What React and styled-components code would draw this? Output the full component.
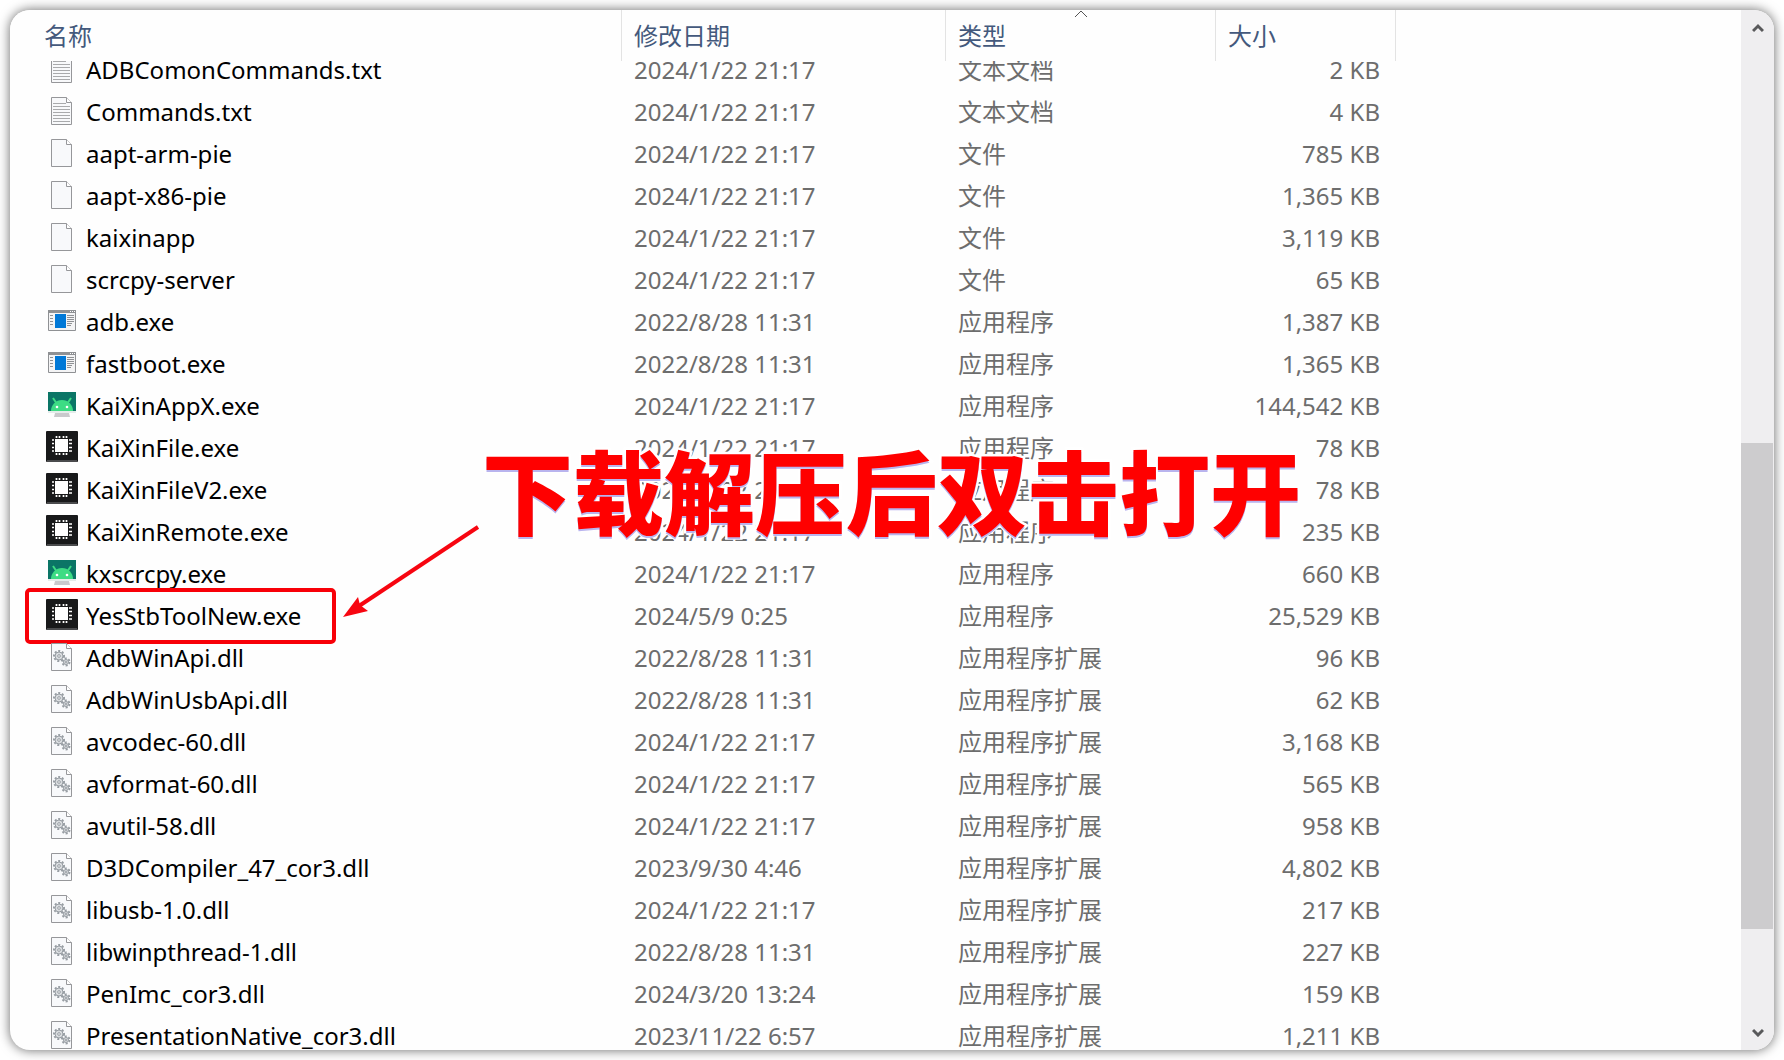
import styled, { createGlobalStyle, css } from "styled-components";

const files = [
  ["txt", "ADBComonCommands.txt", "2024/1/22 21:17", "文本文档", "2 KB"],
  ["txt", "Commands.txt", "2024/1/22 21:17", "文本文档", "4 KB"],
  ["file", "aapt-arm-pie", "2024/1/22 21:17", "文件", "785 KB"],
  ["file", "aapt-x86-pie", "2024/1/22 21:17", "文件", "1,365 KB"],
  ["file", "kaixinapp", "2024/1/22 21:17", "文件", "3,119 KB"],
  ["file", "scrcpy-server", "2024/1/22 21:17", "文件", "65 KB"],
  ["exe", "adb.exe", "2022/8/28 11:31", "应用程序", "1,387 KB"],
  ["exe", "fastboot.exe", "2022/8/28 11:31", "应用程序", "1,365 KB"],
  ["android", "KaiXinAppX.exe", "2024/1/22 21:17", "应用程序", "144,542 KB"],
  ["chip", "KaiXinFile.exe", "2024/1/22 21:17", "应用程序", "78 KB"],
  ["chip", "KaiXinFileV2.exe", "2024/1/22 21:17", "应用程序", "78 KB"],
  ["chip", "KaiXinRemote.exe", "2024/1/22 21:17", "应用程序", "235 KB"],
  ["android", "kxscrcpy.exe", "2024/1/22 21:17", "应用程序", "660 KB"],
  ["chip", "YesStbToolNew.exe", "2024/5/9 0:25", "应用程序", "25,529 KB"],
  ["dll", "AdbWinApi.dll", "2022/8/28 11:31", "应用程序扩展", "96 KB"],
  ["dll", "AdbWinUsbApi.dll", "2022/8/28 11:31", "应用程序扩展", "62 KB"],
  ["dll", "avcodec-60.dll", "2024/1/22 21:17", "应用程序扩展", "3,168 KB"],
  ["dll", "avformat-60.dll", "2024/1/22 21:17", "应用程序扩展", "565 KB"],
  ["dll", "avutil-58.dll", "2024/1/22 21:17", "应用程序扩展", "958 KB"],
  ["dll", "D3DCompiler_47_cor3.dll", "2023/9/30 4:46", "应用程序扩展", "4,802 KB"],
  ["dll", "libusb-1.0.dll", "2024/1/22 21:17", "应用程序扩展", "217 KB"],
  ["dll", "libwinpthread-1.dll", "2022/8/28 11:31", "应用程序扩展", "227 KB"],
  ["dll", "PenImc_cor3.dll", "2024/3/20 13:24", "应用程序扩展", "159 KB"],
  ["dll", "PresentationNative_cor3.dll", "2023/11/22 6:57", "应用程序扩展", "1,211 KB"],
];

const Sheet = ({ children }) => (
  <>
    <path d="M5.5 2.5h15l5 5v22h-20z" fill="#f8f9fb" stroke="#96979a" />
    {children}
    <path d="M20.5 2.5v5h5" fill="#fff" stroke="#96979a" />
  </>
);

const Gear = ({ x, y, r }) => (
  <g transform={`translate(${x} ${y})`} fill="none" stroke="#979da3">
    <circle r={r + 1} strokeWidth="2" strokeDasharray="2 1.7" />
    <circle r={r} fill="#d9dcdf" />
    <circle r={r / 3} fill="#fff" />
  </g>
);

const FileIcon = ({ kind }) => (
  <Icon viewBox="0 0 32 32" aria-hidden="true">
    {kind === "file" && <Sheet />}
    {kind === "txt" && (
      <Sheet>
        <path
          d="M7 8.5h13M7 11.5h17M7 14.5h17M7 17.5h17M7 20.5h17M7 23.5h17M7 26.5h17"
          stroke="#a9aaac"
        />
      </Sheet>
    )}
    {kind === "dll" && (
      <Sheet>
        <Gear x={13} y={15} r={4} />
        <Gear x={20} y={21} r={2.5} />
      </Sheet>
    )}
    {kind === "exe" && (
      <>
        <path d="M2.5 5.500h27v20h-27z" fill="#f4f4f5" stroke="#8f9194" />
        <path d="M2 5h28v3H2z" fill="#8f9194" />
        <path d="M24 6h1v1h-1zM26 6h1v1h-1zM28 6h1v1h-1z" fill="#fff" />
        <path d="M9 9h11v14H9z" fill="#0078d7" />
        <path
          d="M4 10.5h3M4 13.5h3M4 16.5h3M4 19.5h3M21 10.5h7M21 12.5h7M21 14.5h7M21 16.5h7M21 18.5h5M21 20.5h4"
          stroke="#8f9194"
        />
      </>
    )}
    {kind === "android" && (
      <>
        <path d="M2 3h28v19H2z" fill="#0b7566" />
        <path d="M2 22h28v2H2z" fill="#e4ecea" />
        <path d="M9 24h14l1 4H8z" fill="#c9c9cc" />
        <path d="M5 22a11 11 0 0 1 22 0z" fill="#3ddc84" />
        <path d="M7 9l4 6M25 9l-4 6" stroke="#3ddc84" strokeWidth="2" />
        <circle cx="11" cy="18" r="1.3" fill="#fff" />
        <circle cx="21" cy="18" r="1.3" fill="#fff" />
      </>
    )}
    {kind === "chip" && (
      <>
        <rect width="32" height="31" rx="1" fill="#18191a" />
        <path d="M1 29h30v2H1z" fill="#4a4b4d" />
        <path d="M9 8h13v13H9z" fill="#fff" />
        <path
          d="M10.5 5v2M13.5 5v2M17.5 5v2M20.5 5v2M10.5 22v2M13.5 22v2M17.5 22v2M20.5 22v2M6 9h2M6 12.500h2M6 16.500h2M6 20h2M23 9h3M23 12.500h3M23 16.500h3M23 20h3"
          stroke="#fff"
          strokeWidth="1.7"
        />
      </>
    )}
  </Icon>
);

const Annotation = () => (
  <>
    <Frame />
    <Arrow viewBox="0 0 140 96" aria-hidden="true">
      <path d="M137 4L18 83" stroke="#f70510" strokeWidth="4" />
      <path d="M2 94L17 74l2 8 8 6z" fill="#f70510" />
    </Arrow>
    <Caption>下载解压后双击打开</Caption>
  </>
);

const App = () => (
  <>
    <GlobalStyle />
    <Window>
      <Table>
        <Head>
          <HeadRow>
            <HeadCell>名称</HeadCell>
            <HeadCell>修改日期</HeadCell>
            <HeadCell aria-sort="ascending">
              类型
              <SortMark viewBox="0 0 14 8" aria-hidden="true">
                <path d="M1 7l6-6 6 6" />
              </SortMark>
            </HeadCell>
            <HeadCell>大小</HeadCell>
          </HeadRow>
        </Head>
        <Body>
          {files.map(([kind, name, date, type, size]) => (
            <Row key={name}>
              <NameCell>
                <FileIcon kind={kind} />
                {name}
                {name === "YesStbToolNew.exe" && <Annotation />}
              </NameCell>
              <Cell>{date}</Cell>
              <Cell>{type}</Cell>
              <Cell $right>{size}</Cell>
            </Row>
          ))}
        </Body>
      </Table>
      <ScrollBar>
        <ScrollButton aria-label="向上滚动">
          <Chevron viewBox="0 0 12 10">
            <path d="M1 8l5-5 5 5" />
          </Chevron>
        </ScrollButton>
        <Track>
          <Thumb />
        </Track>
        <ScrollButton aria-label="向下滚动">
          <Chevron viewBox="0 0 12 10">
            <path d="M1 3l5 5 5-5" />
          </Chevron>
        </ScrollButton>
      </ScrollBar>
    </Window>
  </>
);

export default App;

const GlobalStyle = createGlobalStyle`
  * {
    box-sizing: border-box;
  }
  body {
    margin: 0;
    padding: 10px;
    background: #fff;
    font-family: "Noto Sans", "Noto Sans CJK SC", sans-serif;
    font-size: 24px;
    line-height: 42px;
    overflow: hidden;
  }
`;
const Window = styled.main`
  display: flex;
  height: calc(100vh - 20px);
  overflow: hidden;
  border-radius: 20px;
  background: #fefefe;
  box-shadow: 0 0 12px rgba(0, 0, 0, 0.6);
`;
const Table = styled.table`
  display: block;
  flex: 1;
  min-width: 0;
`;
const columns = css`
  display: grid;
  grid-template-columns: 612fr 324fr 270fr 180fr 345fr;
`;
const Head = styled.thead`
  display: block;
  position: relative;
  z-index: 1;
  background: #fefefe;
`;
const HeadRow = styled.tr`
  ${columns}
  height: 51px;
`;
const HeadCell = styled.th`
  position: relative;
  padding: 5px 12px 0;
  border-right: 1px solid #e3e3e3;
  color: #44597c;
  font-weight: 400;
  text-align: left;
  &:first-child {
    padding-left: 34px;
  }
`;
const SortMark = styled.svg`
  position: absolute;
  top: 0;
  left: calc(50% - 7px);
  width: 14px;
  height: 8px;
  fill: none;
  stroke: #555;
`;
/* scrolled a little, so the first row slides under the header */
const Body = styled.tbody`
  display: block;
  margin-top: -12px;
`;
const Row = styled.tr`
  ${columns}
  height: 42px;
`;
const Cell = styled.td`
  padding: 0 16px 0 12px;
  color: #6d6d6d;
  white-space: nowrap;
  text-align: ${({ $right }) => ($right ? "right" : "left")};
`;
const NameCell = styled.td`
  position: relative;
  display: flex;
  align-items: center;
  gap: 8px;
  padding: 0 0 0 36px;
  color: #000;
  white-space: nowrap;
`;
const Icon = styled.svg`
  width: 32px;
  height: 32px;
  margin-bottom: 2px;
  fill: none;
`;
const Frame = styled.span`
  position: absolute;
  top: -7px;
  left: 15px;
  width: 311px;
  height: 56px;
  border: 4px solid #f80008;
  border-radius: 5px;
`;
const Arrow = styled.svg`
  position: absolute;
  top: -72px;
  left: 331px;
  width: 140px;
  height: 96px;
  fill: none;
`;
const Caption = styled.strong`
  position: absolute;
  top: -157px;
  left: 472px;
  color: #f00;
  font-size: 91px;
  font-weight: 900;
  line-height: 110px;
  paint-order: stroke fill;
  -webkit-text-stroke: 5px #fff;
  text-shadow: 0 2px 0 #b9b4ee;
`;
const ScrollBar = styled.aside`
  display: flex;
  flex-direction: column;
  width: 33px;
  background: #efeef0;
`;
const ScrollButton = styled.button`
  display: flex;
  align-items: center;
  justify-content: center;
  height: 36px;
  padding: 0;
  border: 0;
  background: none;
`;
const Chevron = styled.svg`
  width: 12px;
  height: 10px;
  fill: none;
  stroke: #59595b;
  stroke-width: 3;
`;
const Track = styled.div`
  display: grid;
  grid-template-rows: 397fr 486fr 85fr;
  flex: 1;
`;
const Thumb = styled.div`
  grid-row: 2;
  margin-right: 1px;
  background: #cdccce;
`;
